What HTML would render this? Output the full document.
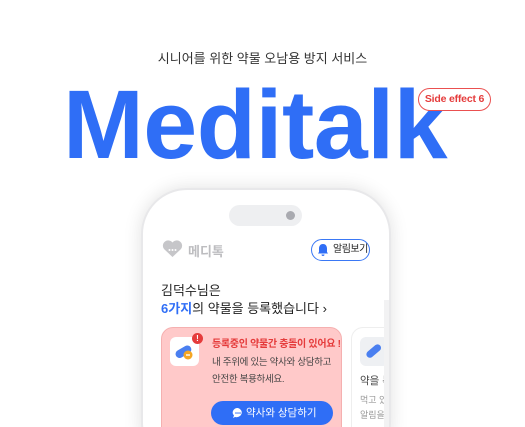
<!DOCTYPE html>
<html><head><meta charset="utf-8"><style>
*{margin:0;padding:0;box-sizing:border-box}
html,body{width:525px;height:427px;overflow:hidden}
body{background:#fff;font-family:"Liberation Sans","Noto Sans CJK KR",sans-serif}
#w{position:relative;width:525px;height:427px;overflow:hidden}
.a{position:absolute}
</style></head><body><div id="w">
<div class="a" style="left:0;width:525px;top:48px;text-align:center;font-size:13px;color:#333">시니어를 위한 약물 오남용 방지 서비스</div>
<div class="a" style="left:63px;top:70px;font-size:97px;font-weight:bold;color:#2f6ef6;letter-spacing:-0.5px;line-height:110px;white-space:nowrap">Meditalk</div>
<div class="a" style="left:418px;top:88px;width:73px;height:23px;border:1px solid #ea5050;border-radius:12px;background:#fff;color:#e53b3b;font-size:10.5px;text-align:center;line-height:21px;font-weight:bold;white-space:nowrap;letter-spacing:-0.2px">Side effect 6</div>
<div class="a" style="left:141px;top:188px;width:250px;height:280px;border-radius:46px;border:2px solid #e8e8ea;box-shadow:0 0 18px rgba(0,0,0,0.12);background:#fff"></div>
<div class="a" style="left:229px;top:205px;width:73px;height:21px;border-radius:11px;background:#eeeff1"></div>
<div class="a" style="left:286px;top:211px;width:9px;height:9px;border-radius:50%;background:#a9aab0"></div>
<svg class="a" style="left:162px;top:240px" width="21" height="18" viewBox="0 0 21 18"><path d="M10.5 17 L2 9 A5 5 0 0 1 10.5 2.5 A5 5 0 0 1 19 9 Z" fill="#c6c6c9"/><circle cx="7.5" cy="10" r="1" fill="#fff"/><circle cx="10.5" cy="10" r="1" fill="#fff"/><circle cx="13.5" cy="10" r="1" fill="#fff"/></svg>
<div class="a" style="left:188px;top:241px;font-size:13px;color:#bdbdc0;font-weight:bold">메디톡</div>
<div class="a" style="left:311px;top:239px;width:59px;height:22px;border:1px solid #3a78f5;border-radius:11px;font-size:10px;color:#222;line-height:20px;padding-left:21px;white-space:nowrap;letter-spacing:-0.5px">알림보기</div>
<svg class="a" style="left:317px;top:243px" width="12" height="14" viewBox="0 0 12 14"><path d="M6 1 C3 1 2 3.5 2 5.5 L2 9 L1 10.5 L11 10.5 L10 9 L10 5.5 C10 3.5 9 1 6 1Z M4.5 11.5 A1.5 1.5 0 0 0 7.5 11.5Z" fill="#2f6ef6"/></svg>
<div class="a" style="left:161px;top:280px;font-size:13px;color:#222">김덕수님은</div>
<div class="a" style="left:161px;top:298px;font-size:13px;color:#222;white-space:nowrap"><span style="color:#2f6ef6;font-weight:bold">6가지</span>의 약물을 등록했습니다 ›</div>
<div class="a" style="left:161px;top:327px;width:181px;height:120px;border-radius:12px;background:#ffc9c9;border:1px solid #f5b0b0"></div>
<div class="a" style="left:170px;top:337px;width:29px;height:29px;border-radius:6px;background:#fff"></div>
<svg class="a" style="left:174px;top:342px" width="22" height="20" viewBox="0 0 22 20"><rect x="1" y="6" width="17" height="8" rx="4" transform="rotate(-30 9 10)" fill="#4a7ff0"/><circle cx="14" cy="13" r="4.5" fill="#f5a623"/><rect x="12" y="12.3" width="4" height="1.4" fill="#fff"/></svg>
<div class="a" style="left:192px;top:333px;width:11px;height:11px;border-radius:50%;background:#e53b3b;color:#fff;font-size:8px;font-weight:bold;text-align:center;line-height:11px">!</div>
<div class="a" style="left:212px;top:335px;font-size:10px;color:#e53b3b;font-weight:bold;white-space:nowrap;letter-spacing:-0.3px">등록중인 약물간 충돌이 있어요 !</div>
<div class="a" style="left:212px;top:354px;font-size:9.5px;color:#444;line-height:17px;white-space:nowrap;letter-spacing:-0.3px">내 주위에 있는 약사와 상담하고<br>안전한 복용하세요.</div>
<div class="a" style="left:211px;top:401px;width:122px;height:24px;border-radius:12px;background:#2f6ef6;color:#fff;font-size:10.5px;line-height:24px;padding-left:35px;white-space:nowrap">약사와 상담하기</div>
<svg class="a" style="left:232px;top:407px" width="12" height="12" viewBox="0 0 12 12"><path d="M6 1 A5 4.5 0 1 1 3 10 L1 11 L2 8.5 A5 4.5 0 0 1 6 1Z" fill="#fff"/><circle cx="4" cy="6" r=".8" fill="#2f6ef6"/><circle cx="6" cy="6" r=".8" fill="#2f6ef6"/><circle cx="8" cy="6" r=".8" fill="#2f6ef6"/></svg>
<div class="a" style="left:351px;top:327px;width:33px;height:120px;border-radius:12px 0 0 12px;background:#fff;border:1px solid #eee;border-right:none;overflow:hidden">
<div class="a" style="left:8px;top:9px;width:29px;height:29px;border-radius:6px;background:#eef0f3"></div>
<svg class="a" style="left:12px;top:14px" width="18" height="18"><rect x="1" y="6" width="17" height="7" rx="3.5" transform="rotate(-40 9 9)" fill="#4a7ff0"/></svg>
<div class="a" style="left:8px;top:45px;font-size:10.5px;color:#444;white-space:nowrap">약을 복</div>
<div class="a" style="left:8px;top:65px;font-size:9px;color:#999;line-height:15px;white-space:nowrap">먹고 있<br>알림을</div>
</div>
<div class="a" style="left:384px;top:300px;width:5px;height:127px;background:#f2f2f3"></div>
</div></body></html>
